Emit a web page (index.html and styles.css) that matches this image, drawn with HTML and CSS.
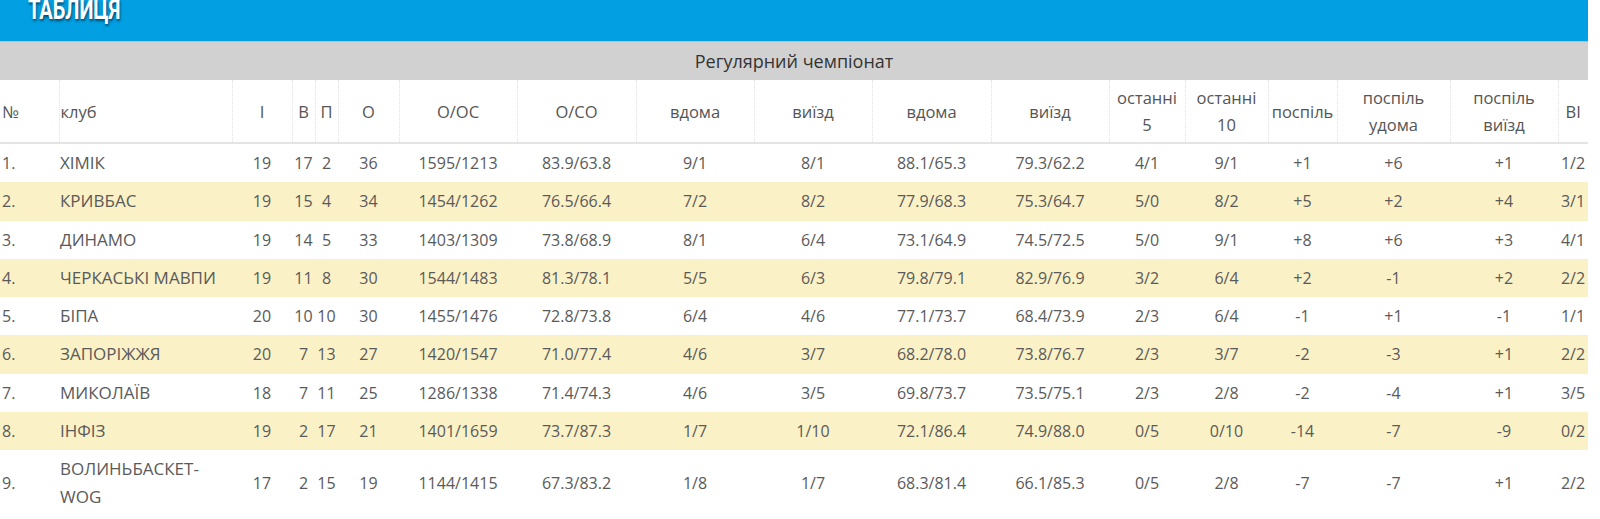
FILE: index.html
```html
<!DOCTYPE html>
<html lang="uk">
<head>
<meta charset="utf-8">
<title>Таблиця</title>
<link rel="stylesheet" href="styles.css">
</head>
<body>
<div class="page">
  <div class="banner"><h1 class="banner-title">ТАБЛИЦЯ</h1></div>
  <div class="stage">Регулярний чемпіонат</div>
  <table class="standings">
    <colgroup>
      <col style="width:59px"><col style="width:173px"><col style="width:60px"><col style="width:23px"><col style="width:23px"><col style="width:61px"><col style="width:118px"><col style="width:119px"><col style="width:118px"><col style="width:118px"><col style="width:119px"><col style="width:118px"><col style="width:76px"><col style="width:83px"><col style="width:69px"><col style="width:113px"><col style="width:108px"><col style="width:30px">
    </colgroup>
    <thead>
      <tr>
        <th class="left">№</th><th class="left">клуб</th><th>І</th><th>В</th><th>П</th><th>О</th><th>О/ОС</th><th>О/СО</th><th>вдома</th><th>виїзд</th><th>вдома</th><th>виїзд</th><th>останні<br>5</th><th>останні<br>10</th><th>поспіль</th><th>поспіль<br>удома</th><th>поспіль<br>виїзд</th><th>ВІ</th>
      </tr>
    </thead>
    <tbody>
      <tr><td class="left">1.</td><td class="left club">ХІМІК</td><td>19</td><td>17</td><td>2</td><td>36</td><td>1595/1213</td><td>83.9/63.8</td><td>9/1</td><td>8/1</td><td>88.1/65.3</td><td>79.3/62.2</td><td>4/1</td><td>9/1</td><td>+1</td><td>+6</td><td>+1</td><td>1/2</td></tr>
      <tr class="alt"><td class="left">2.</td><td class="left club">КРИВБАС</td><td>19</td><td>15</td><td>4</td><td>34</td><td>1454/1262</td><td>76.5/66.4</td><td>7/2</td><td>8/2</td><td>77.9/68.3</td><td>75.3/64.7</td><td>5/0</td><td>8/2</td><td>+5</td><td>+2</td><td>+4</td><td>3/1</td></tr>
      <tr><td class="left">3.</td><td class="left club">ДИНАМО</td><td>19</td><td>14</td><td>5</td><td>33</td><td>1403/1309</td><td>73.8/68.9</td><td>8/1</td><td>6/4</td><td>73.1/64.9</td><td>74.5/72.5</td><td>5/0</td><td>9/1</td><td>+8</td><td>+6</td><td>+3</td><td>4/1</td></tr>
      <tr class="alt"><td class="left">4.</td><td class="left club">ЧЕРКАСЬКІ МАВПИ</td><td>19</td><td>11</td><td>8</td><td>30</td><td>1544/1483</td><td>81.3/78.1</td><td>5/5</td><td>6/3</td><td>79.8/79.1</td><td>82.9/76.9</td><td>3/2</td><td>6/4</td><td>+2</td><td>-1</td><td>+2</td><td>2/2</td></tr>
      <tr><td class="left">5.</td><td class="left club">БІПА</td><td>20</td><td>10</td><td>10</td><td>30</td><td>1455/1476</td><td>72.8/73.8</td><td>6/4</td><td>4/6</td><td>77.1/73.7</td><td>68.4/73.9</td><td>2/3</td><td>6/4</td><td>-1</td><td>+1</td><td>-1</td><td>1/1</td></tr>
      <tr class="alt"><td class="left">6.</td><td class="left club">ЗАПОРІЖЖЯ</td><td>20</td><td>7</td><td>13</td><td>27</td><td>1420/1547</td><td>71.0/77.4</td><td>4/6</td><td>3/7</td><td>68.2/78.0</td><td>73.8/76.7</td><td>2/3</td><td>3/7</td><td>-2</td><td>-3</td><td>+1</td><td>2/2</td></tr>
      <tr><td class="left">7.</td><td class="left club">МИКОЛАЇВ</td><td>18</td><td>7</td><td>11</td><td>25</td><td>1286/1338</td><td>71.4/74.3</td><td>4/6</td><td>3/5</td><td>69.8/73.7</td><td>73.5/75.1</td><td>2/3</td><td>2/8</td><td>-2</td><td>-4</td><td>+1</td><td>3/5</td></tr>
      <tr class="alt"><td class="left">8.</td><td class="left club">ІНФІЗ</td><td>19</td><td>2</td><td>17</td><td>21</td><td>1401/1659</td><td>73.7/87.3</td><td>1/7</td><td>1/10</td><td>72.1/86.4</td><td>74.9/88.0</td><td>0/5</td><td>0/10</td><td>-14</td><td>-7</td><td>-9</td><td>0/2</td></tr>
      <tr><td class="left">9.</td><td class="left club">ВОЛИНЬБАСКЕТ-<br>WOG</td><td>17</td><td>2</td><td>15</td><td>19</td><td>1144/1415</td><td>67.3/83.2</td><td>1/8</td><td>1/7</td><td>68.3/81.4</td><td>66.1/85.3</td><td>0/5</td><td>2/8</td><td>-7</td><td>-7</td><td>+1</td><td>2/2</td></tr>
    </tbody>
  </table>
</div>
</body>
</html>
```
FILE: styles.css
```css
html, body {
  margin: 0;
  padding: 0;
  background: #ffffff;
}

body {
  font-family: "Open Sans", "Noto Sans", sans-serif;
  color: #555555;
  overflow: hidden;
}

.page {
  width: 1588px;
}

.banner {
  height: 41px;
  background: #02a0e2;
  border-bottom: 1px solid #86d0ef;
  overflow: hidden;
  display: flex;
  align-items: flex-start;
}

.banner-title {
  margin: -3px 0 0 28px;
  font-family: "Roboto", "Liberation Sans", sans-serif;
  font-weight: 700;
  font-size: 27px;
  line-height: 27px;
  color: #ffffff;
  text-shadow: 1px 2px 3px rgba(0, 40, 70, 0.75);
  transform: scaleX(0.74);
  transform-origin: left top;
  letter-spacing: 0;
}

.stage {
  height: 38px;
  line-height: 38px;
  background: #d1d1d1;
  color: #333333;
  font-size: 18px;
  text-align: center;
}

.standings {
  width: 1588px;
  table-layout: fixed;
  border-collapse: collapse;
  font-size: 16px;
}

.standings th {
  font-weight: 400;
  font-size: 16.5px;
  line-height: 27px;
  padding: 4px 0;
  text-align: center;
  color: #555555;
  border-left: 1px dotted #e2e2e2;
  border-bottom: 2px solid #e4e4e4;
}

.standings th:first-child {
  border-left: none;
}

.standings td {
  line-height: 28.25px;
  padding: 5px 0;
  text-align: center;
  color: #5a5a5a;
  white-space: nowrap;
}

.standings .left {
  text-align: left;
  padding-left: 2px;
}

.standings td.left + td.left,
.standings th.left + th.left {
  padding-left: 1px;
}

.standings td.club {
  font-size: 17px;
}

.standings tr.alt td {
  background: #faf1c6;
}
```
